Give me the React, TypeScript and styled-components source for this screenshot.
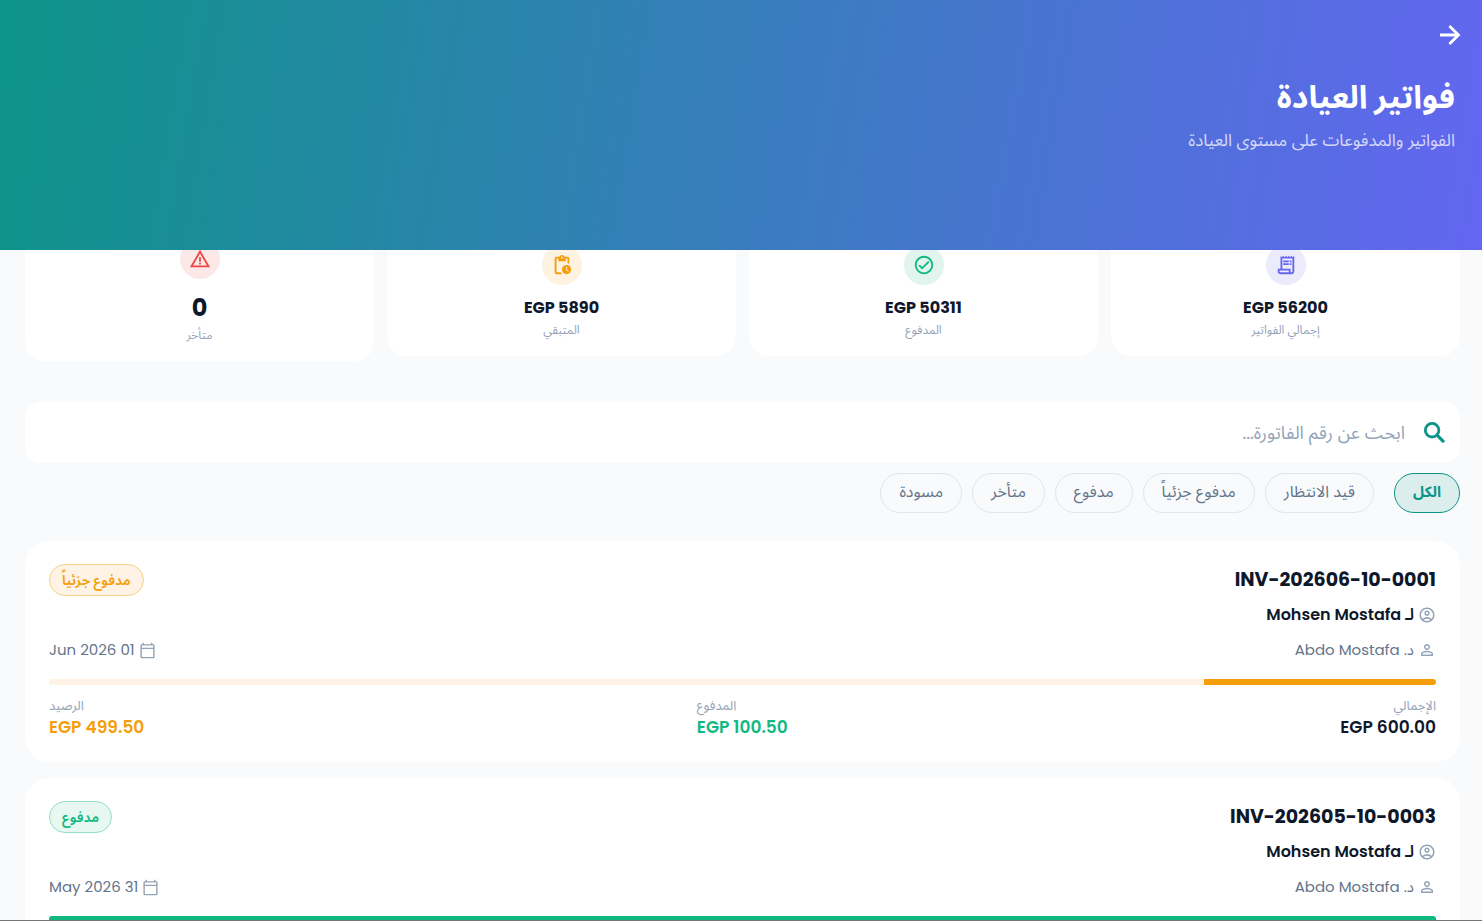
import React from "react";
import styled, { createGlobalStyle } from "styled-components";
import {
  MdOutlineAccountCircle,
  MdOutlineCalendarToday,
  MdOutlineCheckCircle,
  MdOutlineReceiptLong,
  MdPendingActions,
  MdPersonOutline,
  MdWarningAmber,
} from "react-icons/md";

const GlobalStyle = createGlobalStyle`
  * { box-sizing: border-box; }
  body {
    margin: 0;
    background: #f8fafc;
    color: #0f172a;
    font-family: Poppins, Inter, "Noto Sans Arabic", "DejaVu Sans", sans-serif;
  }
  button, input { font-family: inherit; }
  h1, h2, p, dl, dd, ul { margin: 0; padding: 0; }
`;

const Page = styled.div`
  height: 100vh;
  display: flex;
  flex-direction: column;
  overflow: hidden;
  border-bottom: 1px solid #757575;
`;

const Header = styled.header`
  position: relative;
  z-index: 1;
  flex: none;
  height: 250px;
  padding: 15px 27px;
  background: linear-gradient(99.6deg, #0d9488, #6366f1);
  color: #fff;
`;

const BackButton = styled.button`
  display: flex;
  align-items: center;
  justify-content: center;
  width: 40px;
  height: 40px;
  margin-right: -15px;
  padding: 0;
  border: 0;
  background: none;
  color: inherit;
`;

const Title = styled.h1`
  margin-top: 18px;
  font-size: 32px;
  line-height: 48px;
  font-weight: 700;
`;

const Subtitle = styled.p`
  margin-top: 7px;
  font-size: 17px;
  line-height: 24px;
  color: rgba(255, 255, 255, 0.75);
`;

const Content = styled.main`
  flex: 1;
  min-height: 0;
  padding: 0 22px 0 25px;
`;

const Stats = styled.section`
  display: grid;
  grid-template-columns: repeat(4, 1fr);
  align-items: center;
  gap: 13px;
  margin-top: -27px;
`;

const StatCard = styled.article`
  display: flex;
  flex-direction: column;
  align-items: center;
  padding: 16px;
  border-radius: 20px;
  background: #fff;
`;

const StatIcon = styled.span<{ $color: string; $tint: string }>`
  display: flex;
  align-items: center;
  justify-content: center;
  width: 40px;
  height: 40px;
  margin-bottom: 11px;
  border-radius: 50%;
  color: ${(p) => p.$color};
  background: ${(p) => p.$tint};
`;

const StatValue = styled.strong<{ $large?: boolean }>`
  font-size: ${(p) => (p.$large ? 24 : 16)}px;
  line-height: ${(p) => (p.$large ? 35 : 24)}px;
  font-weight: 700;
`;

const StatLabel = styled.span`
  font-size: 12px;
  line-height: 20px;
  color: #94a3b8;
`;

const SearchBox = styled.label`
  display: flex;
  align-items: center;
  gap: 14px;
  height: 61px;
  margin-top: 41px;
  padding: 0 11px;
  border-radius: 16px;
  background: #fff;
  color: #0d9488;
`;

const SearchInput = styled.input`
  flex: 1;
  min-width: 0;
  padding: 0;
  border: 0;
  outline: 0;
  background: none;
  font-size: 18px;
  line-height: 24px;
  color: #0f172a;
  &::placeholder { color: #94a3b8; opacity: 1; }
`;

const Filters = styled.nav`
  display: flex;
  gap: 10px;
  margin-top: 10px;
`;

const Chip = styled.button<{ $active?: boolean }>`
  height: 40px;
  padding: 0 18px 2px;
  margin-left: ${(p) => (p.$active ? 10 : 0)}px;
  border: 1px solid ${(p) => (p.$active ? "#0d9488" : "#e2e5ea")};
  border-radius: 20px;
  background: ${(p) => (p.$active ? "#dbeeed" : "transparent")};
  color: ${(p) => (p.$active ? "#0d9488" : "#64748b")};
  font-size: ${(p) => (p.$active ? 15 : 16)}px;
  font-weight: ${(p) => (p.$active ? 700 : 400)};
`;

const InvoiceList = styled.ul`
  display: flex;
  flex-direction: column;
  gap: 16px;
  margin-top: 28px;
  list-style: none;
`;

const InvoiceCard = styled.li`
  padding: 23px 24px;
  border-radius: 24px;
  background: #fff;
`;

const Row = styled.div<{ $top?: number }>`
  display: flex;
  align-items: center;
  justify-content: space-between;
  margin-top: ${(p) => p.$top ?? 0}px;
`;

const InvoiceNumber = styled.h2`
  font-size: 19px;
  line-height: 32px;
  font-weight: 700;
`;

const Badge = styled.span<{ $color: string; $tint: string; $edge: string }>`
  display: flex;
  align-items: center;
  height: 32px;
  padding: 0 12px;
  border: 1px solid ${(p) => p.$edge};
  border-radius: 16px;
  background: ${(p) => p.$tint};
  color: ${(p) => p.$color};
  font-size: 14px;
  font-weight: 600;
`;

const Meta = styled.span<{ $strong?: boolean }>`
  display: flex;
  align-items: center;
  gap: 4px;
  font-size: ${(p) => (p.$strong ? 16 : 15)}px;
  line-height: 22px;
  font-weight: ${(p) => (p.$strong ? 600 : 400)};
  color: ${(p) => (p.$strong ? "#0f172a" : "#64748b")};
  svg { color: #94a3b8; }
`;

const Progress = styled.div<{ $tint: string }>`
  height: 6px;
  margin-top: 18px;
  border-radius: 3px;
  overflow: hidden;
  background: ${(p) => p.$tint};
`;

const ProgressFill = styled.div<{ $color: string }>`
  height: 100%;
  background: ${(p) => p.$color};
`;

const Totals = styled.dl`
  display: flex;
  justify-content: space-between;
  margin-top: 12px;
`;

const Total = styled.div<{ $start?: boolean }>`
  text-align: ${(p) => (p.$start ? "right" : "left")};
`;

const TotalLabel = styled.dt`
  font-size: 13px;
  line-height: 18px;
  color: #94a3b8;
`;

const TotalValue = styled.dd<{ $color: string }>`
  font-size: 17px;
  line-height: 24px;
  font-weight: 600;
  color: ${(p) => p.$color};
`;

const ArrowIcon = () => (
  <svg width="30" height="30" viewBox="0 0 30 30" fill="none" stroke="currentColor" strokeWidth="2.8" aria-hidden="true">
    <path d="M5 15h18.5M14.4 5.9l9.1 9.1-9.1 9.1" />
  </svg>
);

const SearchIcon = () => (
  <svg width="30" height="30" viewBox="0 0 30 30" fill="none" stroke="currentColor" strokeWidth="2.8" aria-hidden="true">
    <circle cx="13.1" cy="12.2" r="6.8" />
    <path d="M18 17.1l7 7" strokeWidth="3.2" />
  </svg>
);

const stats = [
  { label: "إجمالي الفواتير", value: "EGP 56200", Icon: MdOutlineReceiptLong, color: "#6366f1", tint: "#ecebfb" },
  { label: "المدفوع", value: "EGP 50311", Icon: MdOutlineCheckCircle, color: "#10b981", tint: "#e1f5ee" },
  { label: "المتبقي", value: "EGP 5890", Icon: MdPendingActions, color: "#f59e0b", tint: "#fef2e1" },
  { label: "متأخر", value: "0", Icon: MdWarningAmber, color: "#ef4444", tint: "#fde8e8", large: true },
];

const filters = ["الكل", "قيد الانتظار", "مدفوع جزئياً", "مدفوع", "متأخر", "مسودة"];

const partial = { label: "مدفوع جزئياً", color: "#f59e0b", tint: "#fef3e5", edge: "#fad08a" };
const paid = { label: "مدفوع", color: "#10b981", tint: "#e7f7f1", edge: "#94dfc6" };

const invoices = [
  {
    number: "INV-202606-10-0001", status: partial, patient: "Mohsen Mostafa", doctor: "Abdo Mostafa",
    date: "01 Jun 2026", totals: { total: "600.00", paid: "100.50", balance: "499.50" }, percent: 16.75,
  },
  {
    number: "INV-202605-10-0003", status: paid, patient: "Mohsen Mostafa", doctor: "Abdo Mostafa",
    date: "31 May 2026", totals: null, percent: 100,
  },
];

export default function App() {
  return (
    <Page dir="rtl" lang="ar">
      <GlobalStyle />
      <Header>
        <BackButton type="button" aria-label="رجوع">
          <ArrowIcon />
        </BackButton>
        <Title>فواتير العيادة</Title>
        <Subtitle>الفواتير والمدفوعات على مستوى العيادة</Subtitle>
      </Header>
      <Content>
        <Stats>
          {stats.map(({ label, value, Icon, color, tint, large }) => (
            <StatCard key={label}>
              <StatIcon $color={color} $tint={tint}>
                <Icon size={22} />
              </StatIcon>
              <StatValue $large={large}>{value}</StatValue>
              <StatLabel>{label}</StatLabel>
            </StatCard>
          ))}
        </Stats>
        <SearchBox>
          <SearchIcon />
          <SearchInput type="text" aria-label="بحث" placeholder="ابحث عن رقم الفاتورة..." />
        </SearchBox>
        <Filters>
          {filters.map((name, i) => (
            <Chip key={name} type="button" $active={i === 0} aria-pressed={i === 0}>
              {name}
            </Chip>
          ))}
        </Filters>
        <InvoiceList>
          {invoices.map((inv) => (
            <InvoiceCard key={inv.number}>
              <Row>
                <InvoiceNumber>{inv.number}</InvoiceNumber>
                <Badge $color={inv.status.color} $tint={inv.status.tint} $edge={inv.status.edge}>
                  {inv.status.label}
                </Badge>
              </Row>
              <Row $top={8}>
                <Meta $strong>
                  <MdOutlineAccountCircle size={18} />
                  <span>لـ {inv.patient}</span>
                </Meta>
              </Row>
              <Row $top={13}>
                <Meta>
                  <MdPersonOutline size={18} />
                  <span>د. {inv.doctor}</span>
                </Meta>
                <Meta>
                  <MdOutlineCalendarToday size={17} />
                  <span>{inv.date}</span>
                </Meta>
              </Row>
              <Progress $tint={inv.status.tint}>
                <ProgressFill $color={inv.status.color} style={{ width: `${inv.percent}%` }} />
              </Progress>
              {inv.totals && (
                <Totals>
                  <Total $start>
                    <TotalLabel>الإجمالي</TotalLabel>
                    <TotalValue $color="#0f172a">EGP {inv.totals.total}</TotalValue>
                  </Total>
                  <Total>
                    <TotalLabel>المدفوع</TotalLabel>
                    <TotalValue $color="#10b981">EGP {inv.totals.paid}</TotalValue>
                  </Total>
                  <Total>
                    <TotalLabel>الرصيد</TotalLabel>
                    <TotalValue $color={inv.status.color}>EGP {inv.totals.balance}</TotalValue>
                  </Total>
                </Totals>
              )}
            </InvoiceCard>
          ))}
        </InvoiceList>
      </Content>
    </Page>
  );
}
